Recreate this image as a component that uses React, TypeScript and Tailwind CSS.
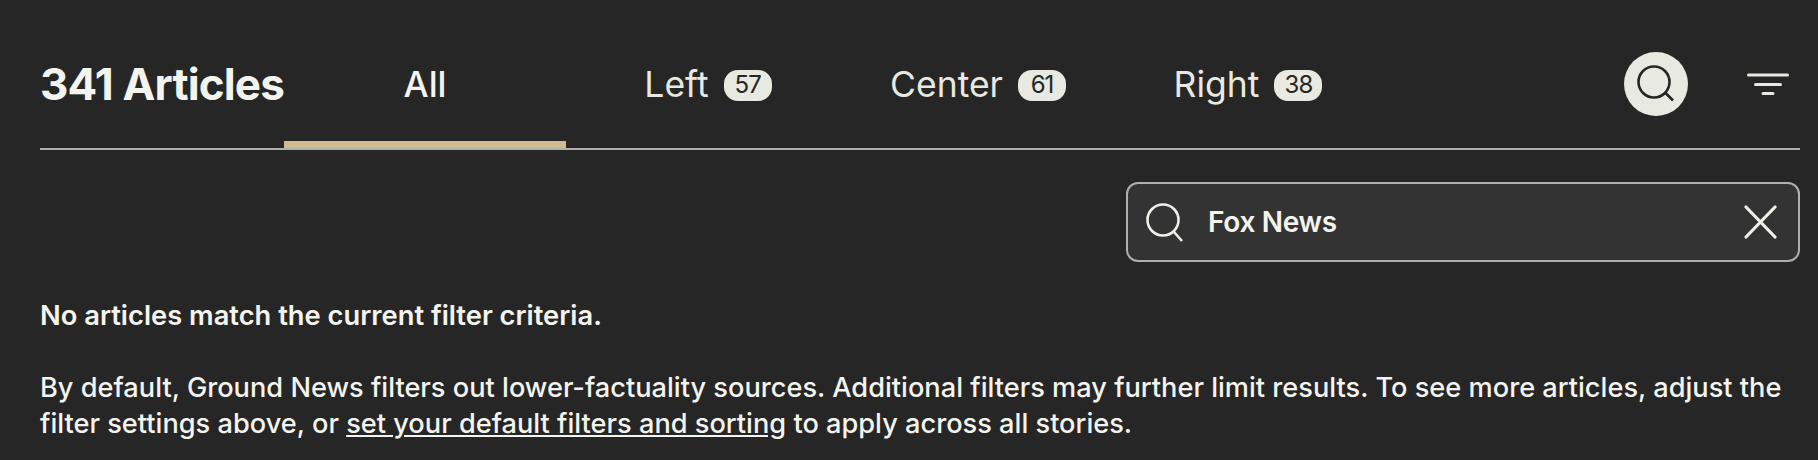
import React from "react";

const font = "font-['Inter',sans-serif]";

function Badge({ n }: { n: string }) {
  return (
    <span className="ml-[15px] flex h-[31px] w-[48px] items-center justify-center rounded-[14px] bg-[#e8e9e0] text-[24px] tracking-[-1px] text-[#262626]">
      {n}
    </span>
  );
}

function Tab({ label, n, width, active }: { label: string; n?: string; width: string; active?: boolean }) {
  return (
    <div className={`relative flex h-full items-center justify-center pt-[2px] ${width}`}>
      <span className={`text-[35.5px] ${active ? "font-medium text-[#f4f4ef]" : "text-[#e8e9e0]"}`}>{label}</span>
      {n && <Badge n={n} />}
      {active && <div className="absolute bottom-0 left-0 h-[7px] w-full bg-[#d2bb8f]" />}
    </div>
  );
}

export default function App() {
  return (
    <div className={`h-[460px] w-[1818px] overflow-hidden bg-[#262626] pl-10 pr-[18px] text-[#f4f4ef] ${font}`}>
      <div className="flex h-[150px] items-center border-b-2 border-[#b0b0a8] pt-[20px]">
        <div className="flex h-full w-full items-stretch">
          <div className="flex w-[244px] items-center whitespace-nowrap text-[44px] font-bold tracking-[-0.85px]">341 Articles</div>
          <Tab label="All" width="w-[282px]" active />
          <Tab label="Left" n="57" width="w-[284px]" />
          <Tab label="Center" n="61" width="w-[256px]" />
          <Tab label="Right" n="38" width="w-[284px]" />
          <div className="ml-auto flex items-center">
            <div className="flex h-16 w-16 items-center justify-center rounded-full bg-[#e8e9e0]">
              <svg width="40" height="40" viewBox="0 0 40 40" fill="none" stroke="#262626" strokeWidth="2.6">
                <circle cx="18" cy="18" r="15.5" />
                <path d="M29.5 29 L37 36.5" />
              </svg>
            </div>
            <svg className="ml-[59px] mr-[11px]" width="42" height="22" viewBox="0 0 42 22" fill="none" stroke="#e8e9e0" strokeWidth="3" strokeLinecap="round">
              <path d="M1.5 2H40.5M8.5 11.5H33.5M16 20.5H26" />
            </svg>
          </div>
        </div>
      </div>
      <div className="mt-8 flex justify-end">
        <div className="flex h-[80px] w-[674px] items-center rounded-[12px] border-2 border-[#b0b0a8] bg-[#333333] pl-[18px] pr-[21px]">
          <svg width="39" height="39" viewBox="0 0 39 39" fill="none" stroke="#f0f0ea" strokeWidth="2.6">
            <circle cx="17" cy="17" r="15.5" />
            <path d="M28 29 L36 38" />
          </svg>
          <span className="ml-[23px] text-[28px] font-semibold tracking-[-0.3px]">Fox News</span>
          <svg className="ml-auto" width="34" height="34" viewBox="0 0 34 34" fill="none" stroke="#f0f0ea" strokeWidth="3.2" strokeLinecap="round">
            <path d="M3 2L32 32M32 2L3 32" />
          </svg>
        </div>
      </div>
      <p className="mt-[36px] text-[27.3px] font-semibold leading-[36px]">No articles match the current filter criteria.</p>
      <p className="mt-[36px] w-[1760px] text-[27.2px] font-medium leading-[36px]">
        By default, Ground News filters out lower-factuality sources. Additional filters may further limit results. To see more articles, adjust the filter settings above, or <span className="underline">set your default filters and sorting</span> to apply across all stories.
      </p>
    </div>
  );
}
